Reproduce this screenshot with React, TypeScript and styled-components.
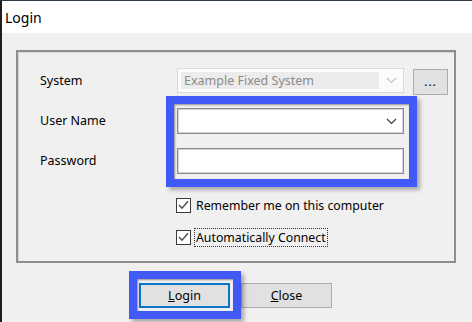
import React from 'react';
import styled, { createGlobalStyle } from 'styled-components';

const GlobalStyle = createGlobalStyle`
  html, body {
    margin: 0;
    padding: 0;
    background: #f0f0f0;
  }
  body {
    font-family: "Noto Sans", "Segoe UI", sans-serif;
    color: #000;
  }
`;

function Chevron({ disabled }: { disabled?: boolean }) {
  return (
    <svg width="11" height="7" viewBox="0 0 11 7">
      <path
        d="M1 1 L5.5 5.5 L10 1"
        fill="none"
        stroke={disabled ? '#c4c4c4' : '#3a3a3a'}
        strokeWidth="1.2"
      />
    </svg>
  );
}

function CheckMark() {
  return (
    <svg width="11" height="10" viewBox="0 0 11 10">
      <path d="M1 5 L4 8.2 L10 1.2" fill="none" stroke="#4a4a4a" strokeWidth="1.4" />
    </svg>
  );
}

function App() {
  return (
    <>
      <GlobalStyle />
      <Window>
        <TitleBar>Login</TitleBar>
        <GroupBox>
          <FormGrid>
            <Label>System</Label>
            <Combo disabled>
              <DisabledText>Example Fixed System</DisabledText>
              <ChevronSlot>
                <Chevron disabled />
              </ChevronSlot>
            </Combo>
            <BrowseButton>...</BrowseButton>

            <Label>User Name</Label>
            <Highlighted>
              <Combo>
                <span />
                <ChevronSlot>
                  <Chevron />
                </ChevronSlot>
              </Combo>
              <TextBox />
            </Highlighted>
            <span />

            <Label>Password</Label>
            <span />

            <CheckList>
              <CheckRow>
                <Box>
                  <CheckMark />
                </Box>
                <CheckText>Remember me on this computer</CheckText>
              </CheckRow>
              <CheckRow>
                <Box>
                  <CheckMark />
                </Box>
                <CheckText focused>Automatically Connect</CheckText>
              </CheckRow>
            </CheckList>
          </FormGrid>
        </GroupBox>
        <ButtonRow>
          <HighlightWrap>
            <DialogButton primary>
              <u>L</u>ogin
            </DialogButton>
          </HighlightWrap>
          <DialogButton>
            <u>C</u>lose
          </DialogButton>
        </ButtonRow>
      </Window>
    </>
  );
}

const Window = styled.div`
  width: 472px;
  height: 322px;
  box-sizing: border-box;
  border-top: 1px solid #2f3c4a;
  border-left: 2px solid #1e1e1e;
  background: #f0f0f0;
  overflow: hidden;
`;

const TitleBar = styled.div`
  height: 32px;
  background: #fff;
  display: flex;
  align-items: center;
  padding-left: 3px;
  font-size: 14px;
`;

const GroupBox = styled.div`
  margin: 17px 0 0 14px;
  width: 440px;
  height: 213px;
  box-sizing: border-box;
  border: 2px solid #8e8e8e;
  box-shadow: inset 1px 1px 0 #d6d6d6;
  padding: 16px 5px 0 22px;
`;

const FormGrid = styled.div`
  display: grid;
  grid-template-columns: 128px 227px 35px;
  grid-template-rows: 26px 26px 26px auto;
  column-gap: 9px;
  row-gap: 14px;
`;

const Label = styled.div`
  font-size: 12.5px;
  align-self: center;
  line-height: 1;
`;

const Combo = styled.div<{ disabled?: boolean }>`
  height: ${(p) => (p.disabled ? '25px' : '26px')};
  box-sizing: border-box;
  display: flex;
  align-items: center;
  padding: 3px 0 3px 3px;
  background: ${(p) => (p.disabled ? '#fbfbfb' : '#fff')};
  border: 1px solid ${(p) => (p.disabled ? '#d9d9d9' : '#8a8a8a')};
  box-shadow: ${(p) => (p.disabled ? 'none' : 'inset 0 0 0 1px #d4d4d4')};
  & > span {
    flex: 1;
  }
`;

const DisabledText = styled.div`
  flex: 1;
  height: 100%;
  background: #ececec;
  color: #8a8a8a;
  font-size: 12.5px;
  display: flex;
  align-items: center;
  padding-left: 3px;
`;

const ChevronSlot = styled.div`
  width: 24px;
  display: flex;
  justify-content: center;
  align-items: center;
`;

const BrowseButton = styled.div`
  margin-top: 1px;
  height: 26px;
  box-sizing: border-box;
  background: #e1e1e1;
  border: 1px solid #adadad;
  font-size: 12px;
  display: flex;
  align-items: flex-end;
  justify-content: center;
  padding-bottom: 4px;
  letter-spacing: 1px;
`;

const Highlighted = styled.div`
  grid-column: 2;
  grid-row: 2 / span 2;
  position: relative;
  display: flex;
  flex-direction: column;
  justify-content: space-between;

  &::before {
    content: '';
    position: absolute;
    top: -12px;
    left: -11px;
    right: -13px;
    bottom: -13px;
    border: 8px solid #4159f6;
    box-shadow: 3px 3px 4px rgba(0, 0, 0, 0.3), inset 1px 1px 2px rgba(0, 0, 0, 0.4);
    pointer-events: none;
  }
`;

const TextBox = styled.div`
  height: 26px;
  box-sizing: border-box;
  background: #fff;
  border: 1px solid #8a8a8a;
  box-shadow: inset 0 0 0 1px #d4d4d4;
`;

const CheckList = styled.div`
  grid-column: 2 / span 2;
  grid-row: 4;
  margin: 7px 0 0 -1px;
  display: flex;
  flex-direction: column;
  gap: 12px;
`;

const CheckRow = styled.div`
  height: 20px;
  display: flex;
  align-items: center;
  gap: 3px;
`;

const Box = styled.div`
  width: 15px;
  height: 15px;
  box-sizing: border-box;
  border: 1px solid #3c3c3c;
  background: #fff;
  display: flex;
  align-items: center;
  justify-content: center;
`;

const CheckText = styled.span<{ focused?: boolean }>`
  font-size: 12.3px;
  padding: 1px 1px;
  border: 1px ${(p) => (p.focused ? 'dotted #333' : 'solid transparent')};
  line-height: 15px;
`;

const ButtonRow = styled.div`
  margin-top: 20px;
  padding-left: 137px;
  display: flex;
  gap: 11px;
`;

const HighlightWrap = styled.div`
  position: relative;
  display: flex;

  &::before {
    content: '';
    position: absolute;
    top: -12px;
    left: -10px;
    right: -11px;
    bottom: -11px;
    border: 8px solid #4159f6;
    box-shadow: 3px 3px 4px rgba(0, 0, 0, 0.3), inset 1px 1px 2px rgba(0, 0, 0, 0.4);
    pointer-events: none;
  }
`;

const DialogButton = styled.div<{ primary?: boolean }>`
  width: 91px;
  height: 25px;
  box-sizing: border-box;
  background: #e1e1e1;
  border: ${(p) => (p.primary ? '2px solid #0a74cf' : '1px solid #adadad')};
  font-size: 12.5px;
  display: flex;
  align-items: center;
  justify-content: center;
`;

export default App;
